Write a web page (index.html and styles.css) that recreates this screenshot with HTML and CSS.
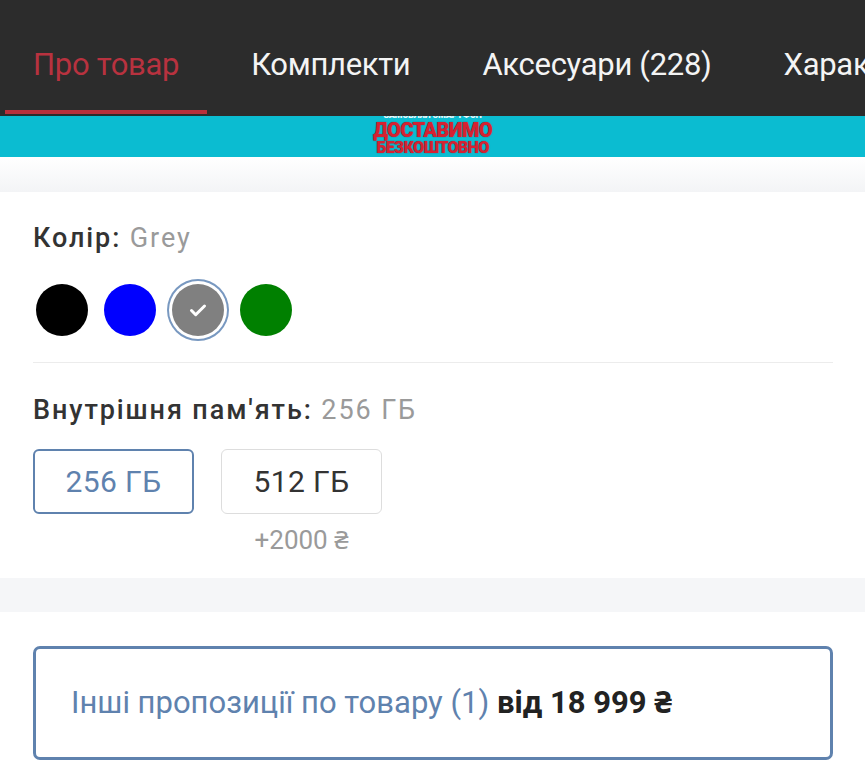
FILE: index.html
```html
<!DOCTYPE html>
<html lang="uk">
<head>
<meta charset="utf-8">
<title>Товар</title>
<link rel="stylesheet" href="styles.css">
</head>
<body>
<nav class="tabs">
  <a class="tab active">Про товар</a>
  <a class="tab">Комплекти</a>
  <a class="tab">Аксесуари (228)</a>
  <a class="tab">Характеристики</a>
</nav>
<div class="banner">
  <div class="banner-inner">
    <span class="banner-small">ЗАМОВЛЯЙ СМАРТФОН</span>
    <span class="banner-big">ДОСТАВИМО</span>
    <span class="banner-mid">БЕЗКОШТОВНО</span>
  </div>
</div>
<div class="gap gap-top"></div>
<section class="card">
  <div class="label"><b>Колір:</b> <span class="value">Grey</span></div>
  <div class="swatches">
    <span class="swatch black"></span>
    <span class="swatch blue"></span>
    <span class="swatch grey selected">
      <svg viewBox="0 0 24 24" width="24" height="24"><path d="M5.5 12.5l4.2 4.2L18.5 8" fill="none" stroke="#fff" stroke-width="3" stroke-linecap="round" stroke-linejoin="round"/></svg>
    </span>
    <span class="swatch green"></span>
  </div>
  <hr class="divider">
  <div class="label"><b>Внутрішня пам'ять:</b> <span class="value">256 ГБ</span></div>
  <div class="options">
    <div class="option">
      <div class="opt-btn current">256 ГБ</div>
    </div>
    <div class="option">
      <div class="opt-btn">512 ГБ</div>
      <div class="opt-extra">+2000 ₴</div>
    </div>
  </div>
</section>
<div class="gap gap-mid"></div>
<section class="offers">
  <div class="offers-box">
    <p class="offers-text"><span class="offers-link">Інші пропозиції по товару (1)</span> <b class="offers-price">від 18 999 ₴</b></p>
  </div>
</section>
</body>
</html>
```

FILE: styles.css
```css
* { box-sizing: border-box; }
html, body { margin: 0; padding: 0; }
body {
  width: 865px;
  height: 775px;
  overflow: hidden;
  background: #ffffff;
  font-family: Roboto, "Noto Sans", sans-serif;
  color: #333;
}
.tabs {
  display: flex;
  gap: 16px;
  height: 116px;
  padding-left: 5px;
  background: #2c2c2c;
  white-space: nowrap;
  overflow: hidden;
}
.tab {
  display: block;
  flex: none;
  height: 114px;
  padding: 49px 28px 0;
  border-bottom: 4px solid transparent;
  font-size: 31px;
  line-height: 32px;
  color: #f4f4f4;
  letter-spacing: -0.3px;
}
.tab.active {
  color: #b8323f;
  border-bottom-color: #b8303b;
}
.banner {
  height: 41px;
  background: #0bbcd1;
  display: flex;
  justify-content: center;
  align-items: flex-end;
  overflow: hidden;
}
.banner-inner {
  display: flex;
  flex-direction: column;
  align-items: center;
  width: 124px;
  padding-bottom: 1px;
  font-family: Roboto, sans-serif;
  font-weight: 900;
}
.banner-small {
  font-size: 9px;
  line-height: 10px;
  color: #e8f7fa;
  letter-spacing: -0.3px;
}
.banner-big {
  font-size: 20px;
  line-height: 20px;
  color: #d62132;
  letter-spacing: -0.6px;
  text-shadow: 0 0 1px #7a1020;
}
.banner-mid {
  font-size: 16px;
  line-height: 16px;
  color: #d62132;
  letter-spacing: -0.6px;
  text-shadow: 0 0 1px #7a1020;
}
.gap { background: #f5f6f8; }
.gap-top {
  height: 35px;
  background: linear-gradient(#ffffff, #f3f4f6);
}
.gap-mid { height: 34px; }
.card {
  background: #fff;
  padding: 30px 32px 22px 33px;
}
.label {
  font-size: 27px;
  line-height: 32px;
  color: #333;
  letter-spacing: 1.9px;
}
.label b { font-weight: 500; color: #333; }
.label .value { color: #9a9a9a; font-weight: 400; }
.swatches {
  display: flex;
  gap: 16px;
  margin-top: 30px;
  padding-left: 3px;
}
.swatch {
  width: 52px;
  height: 52px;
  border-radius: 50%;
  display: flex;
  align-items: center;
  justify-content: center;
}
.swatch.black { background: #000; }
.swatch.blue { background: #0000ff; }
.swatch.grey { background: #808080; }
.swatch.green { background: #008000; }
.swatch.selected {
  box-shadow: 0 0 0 3px #fff, 0 0 0 5px #7898c0;
}
.divider {
  border: 0;
  border-top: 1px solid #ececec;
  margin: 26px 0 0;
}
.divider + .label { margin-top: 31px; }
.options {
  display: flex;
  gap: 27px;
  margin-top: 23px;
}
.option {
  display: flex;
  flex-direction: column;
  align-items: center;
  width: 161px;
}
.opt-btn {
  width: 161px;
  height: 65px;
  border: 1.5px solid #dddddd;
  border-radius: 6px;
  display: flex;
  align-items: center;
  justify-content: center;
  font-size: 30px;
  color: #333;
  letter-spacing: 0.4px;
}
.opt-btn.current {
  border: 2px solid #5f82ae;
  color: #5f82ae;
}
.opt-extra {
  margin-top: 10px;
  font-size: 26px;
  line-height: 32px;
  color: #9a9a9a;
}
.offers {
  background: #fff;
  padding: 34px 32px 20px 33px;
}
.offers-box {
  height: 114px;
  border: 3px solid #5f82ae;
  border-radius: 7px;
  padding-left: 35px;
  display: flex;
  align-items: center;
}
.offers-text {
  margin: 0;
  font-size: 31px;
  line-height: 36px;
  white-space: nowrap;
}
.offers-link { color: #5f82ae; }
.offers-price { font-weight: 700; color: #222; }
```
